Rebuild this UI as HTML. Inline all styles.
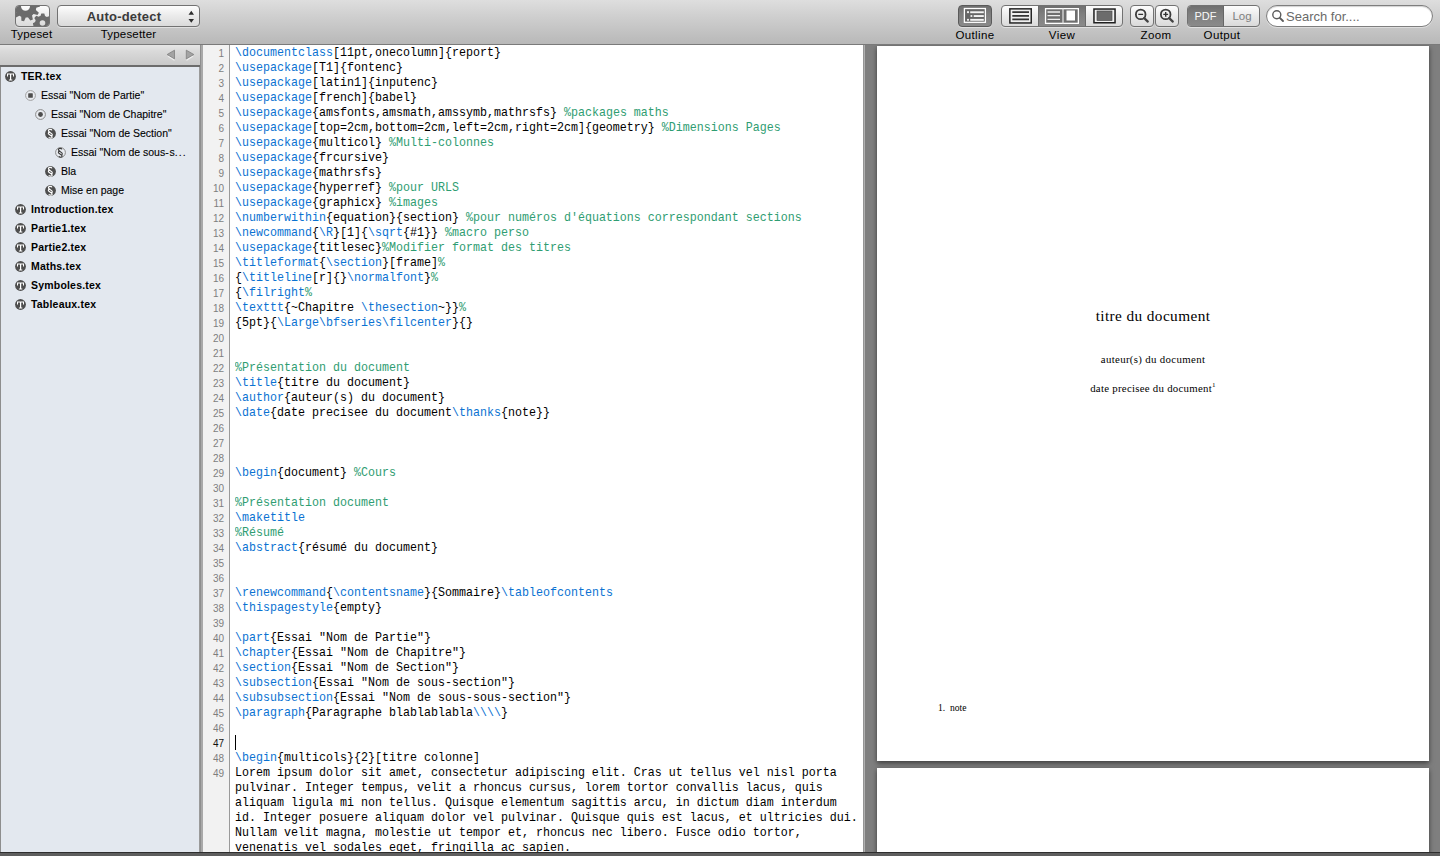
<!DOCTYPE html>
<html><head><meta charset="utf-8">
<style>
*{margin:0;padding:0;box-sizing:border-box}
html,body{width:1440px;height:856px;overflow:hidden;background:#5e5e5e;font-family:"Liberation Sans",sans-serif;position:relative}
#toolbar{position:absolute;left:0;top:0;width:1440px;height:45px;background:linear-gradient(#dedede,#d0d0d0 35%,#b8b8b8);border-bottom:1px solid #7a7a7a}
.lbl{position:absolute;top:28px;font-size:11.5px;letter-spacing:.4px;color:#000;line-height:14px;white-space:nowrap;transform:translateX(-50%)}
.btn{position:absolute;top:5px;height:22px;border:1px solid #727272;border-radius:4px;background:linear-gradient(#fdfdfd,#ececec 45%,#dadada);box-shadow:0 1px 0 rgba(255,255,255,.45);overflow:hidden}
.pressed{background:linear-gradient(#6f6f6f,#7e7e7e 40%,#8a8a8a)}
svg{position:absolute;display:block}
#sidebar{position:absolute;left:0;top:45px;width:200px;height:807px}
#sbhead{position:absolute;left:0;top:0;width:200px;height:22px;background:linear-gradient(#e6e6e6,#dadada 30%,#c9c9c9);border-bottom:2px solid #6c6c6c}
#sblist{position:absolute;left:0;top:22px;width:200px;height:785px;background:#e3e8ef;border-left:1px solid #8e8e8e;border-right:1px solid #9a9a9a}
.it{position:absolute;font-size:10.5px;color:#000;white-space:nowrap;line-height:13px;-webkit-text-stroke:.1px #000}
.it.f{font-weight:bold;font-size:10.5px;-webkit-text-stroke:0;letter-spacing:.2px}
.ic{width:11px;height:11px}
#divider{position:absolute;left:200px;top:45px;width:3px;height:807px;background:#a9a9a9;border-left:1px solid #8f8f8f}
#gutter{position:absolute;left:203px;top:45px;width:27px;height:807px;background:#f2f2f2;border-right:1px solid #9a9a9a}
#nums{position:absolute;right:5px;top:0.5px;font-size:10px;line-height:15px;color:#7e7e7e;text-align:right;white-space:pre}
#editor{position:absolute;left:230px;top:45px;width:633px;height:807px;background:#fff;overflow:hidden}
#code{position:absolute;left:4.5px;top:1px;font-family:"Liberation Mono",monospace;font-size:12.6px;transform:scaleX(.9259);transform-origin:0 0;line-height:15px;color:#000;white-space:pre}
#code b{font-weight:normal;color:#0a72d2}
#code i{font-style:normal;color:#2f9d72}
#cursor{position:absolute;left:5px;top:690px;width:1px;height:15px;background:#000}
#pdfarea{position:absolute;left:863px;top:45px;width:577px;height:807px;background:#7f7f7f;border-left:1px solid #959595;overflow:hidden}
#pdfline{position:absolute;left:864px;top:45px;width:1px;height:807px;background:#b0b0b0}
.page{position:absolute;background:#fff;font-family:"Liberation Serif",serif;color:#000}
.pt{position:absolute;white-space:nowrap;line-height:1}
#bottom{position:absolute;left:0;top:852px;width:1440px;height:4px;background:#5e5e5e;border-top:1px solid #2e2e2e}
</style></head><body>
<div id="toolbar">
  <!-- Typeset -->
  <div class="btn" style="left:15px;width:35px">
    <svg width="33" height="20" viewBox="1 1 33 20" style="left:0;top:0">
      <path fill="#6b6b6b" fill-rule="evenodd" d="M10.73,12.60 L9.08,16.33 L6.38,15.81 L6.24,11.72 L5.75,11.50 L5.26,11.25 L4.80,10.97 L4.34,10.67 L0.81,12.72 L-1.07,10.71 L1.22,7.32 L0.95,6.85 L0.71,6.36 L0.49,5.87 L0.30,5.36 L-3.76,4.94 L-4.09,2.21 L-0.25,0.81 L-0.19,0.27 L-0.10,-0.26 L0.02,-0.79 L0.16,-1.31 L-2.88,-4.05 L-1.55,-6.45 L2.38,-5.32 L2.75,-5.72 L3.13,-6.10 L3.54,-6.46 L3.96,-6.80 L3.11,-10.79 L5.60,-11.95 L8.11,-8.73 L8.65,-8.84 L9.18,-8.92 L9.72,-8.97 L10.27,-9.00 L11.92,-12.73 L14.62,-12.21 L14.76,-8.12 L15.25,-7.90 L15.74,-7.65 L16.20,-7.37 L16.66,-7.07 L20.19,-9.12 L22.07,-7.11 L19.78,-3.72 L20.05,-3.25 L20.29,-2.76 L20.51,-2.27 L20.70,-1.76 L24.76,-1.34 L25.09,1.39 L21.25,2.79 L21.19,3.33 L21.10,3.86 L20.98,4.39 L20.84,4.91 L23.88,7.65 L22.55,10.05 L18.62,8.92 L18.25,9.32 L17.87,9.70 L17.46,10.06 L17.04,10.40 L17.89,14.39 L15.40,15.55 L12.89,12.33 L12.35,12.44 L11.82,12.52 L11.28,12.57Z M6.00,1.20 a4.5,4.5 0 1,0 9.00,0 a4.5,4.5 0 1,0 -9.00,0Z"/>
      <path fill="#6b6b6b" fill-rule="evenodd" d="M25.46,10.89 L26.33,8.47 L29.33,8.58 L30.03,11.05 L30.49,11.23 L30.94,11.45 L31.37,11.70 L31.79,11.97 L34.22,11.14 L36.01,13.56 L34.51,15.64 L34.66,16.12 L34.77,16.61 L34.84,17.10 L34.89,17.59 L37.05,18.98 L36.28,21.88 L33.72,22.01 L33.43,22.42 L33.12,22.81 L32.78,23.18 L32.42,23.52 L32.69,26.08 L29.94,27.29 L28.24,25.36 L27.74,25.40 L27.24,25.40 L26.74,25.36 L26.25,25.29 L24.42,27.09 L21.76,25.70 L22.20,23.17 L21.87,22.80 L21.56,22.41 L21.27,22.00 L21.02,21.57 L18.47,21.26 L17.91,18.31 L20.16,17.08 L20.24,16.59 L20.35,16.10 L20.49,15.63 L20.67,15.16 L19.32,12.97 L21.27,10.69 L23.64,11.69 L24.07,11.44 L24.52,11.22 L24.99,11.04Z M24.70,18.00 a2.8,2.8 0 1,0 5.60,0 a2.8,2.8 0 1,0 -5.60,0Z"/>
    </svg>
  </div>
  <div class="lbl" style="left:31.5px;top:27px;letter-spacing:.2px">Typeset</div>
  <!-- Auto-detect -->
  <div class="btn" style="left:57px;width:143px">
    <svg width="12" height="14" style="left:129px;top:4px" viewBox="0 0 12 14"><path d="M1.5 4.8 L4.3 0.8 L7 4.8Z M1.5 8.9 L7 8.9 L4.3 12.8Z" fill="#2e2e2e"/></svg>
  </div>
  <div style="position:absolute;left:57px;top:8px;width:134px;text-align:center;font-size:13px;font-weight:bold;color:#3a3a3a;line-height:17px;letter-spacing:.2px">Auto-detect</div>
  <div class="lbl" style="left:128.5px;top:27px;letter-spacing:.2px">Typesetter</div>
  <!-- Outline -->
  <div class="btn pressed" style="left:958px;width:34px;border-color:#5a5a5a">
    <svg width="32" height="20" viewBox="0 0 32 20" style="left:0;top:0">
      <rect x="5.4" y="2.5" width="21" height="13.8" fill="#666" stroke="#fff" stroke-width="1.3"/>
      <g fill="#f4f4f4"><circle cx="9" cy="6.2" r="1.1"/><rect x="11.2" y="5.3" width="13.6" height="1.9"/>
      <circle cx="12.4" cy="10" r="1.1"/><rect x="14.7" y="9.1" width="10.1" height="1.9"/>
      <circle cx="9" cy="13.8" r="1.1"/><rect x="11.2" y="12.9" width="13.6" height="1.9"/></g>
    </svg>
  </div>
  <div class="lbl" style="left:975px">Outline</div>
  <!-- View -->
  <div class="btn" style="left:1001px;width:122px">
    <div class="pressed" style="position:absolute;left:36px;top:0;width:48px;height:20px;border-left:1px solid #6a6a6a;border-right:1px solid #6a6a6a"></div>
    <svg width="120" height="20" viewBox="0 0 120 20" style="left:0;top:0">
      <rect x="7.85" y="2.85" width="21.4" height="14.1" fill="#eee" stroke="#262626" stroke-width="1.5"/>
      <g stroke="#333" stroke-width="1.6"><path d="M10.3 6.1H27M10.3 9.9H27M10.3 13.4H27"/></g>
      <rect x="43.55" y="2.65" width="32.8" height="14.7" fill="#6e6e6e" stroke="#fff" stroke-width="1.3"/>
      <path d="M61 2.6V17.4" stroke="#ddd" stroke-width="1.3"/>
      <g stroke="#eee" stroke-width="1.3"><path d="M45.5 6H58M45.5 9.7H58M45.5 13.4H58"/></g>
      <rect x="64.5" y="4.5" width="8.5" height="10" fill="#fff"/>
      <rect x="91.95" y="3.05" width="21.1" height="13.7" fill="#f2f2f2" stroke="#1f1f1f" stroke-width="1.5"/>
      <rect x="95" y="5" width="15" height="9.5" fill="#6c6c6c" stroke="#4a4a4a" stroke-width=".7"/>
    </svg>
  </div>
  <div class="lbl" style="left:1062px">View</div>
  <!-- Zoom -->
  <div class="btn" style="left:1130px;width:24px">
    <svg width="22" height="20" viewBox="0 0 22 20" style="left:0;top:0">
      <circle cx="9.7" cy="8.4" r="4.8" fill="none" stroke="#3c3c3c" stroke-width="1.8"/>
      <path d="M13.2 12.1 L16.8 15.6" stroke="#444" stroke-width="2.2" stroke-linecap="round"/>
      <path d="M7.3 8.4H12.1" stroke="#333" stroke-width="1.4"/>
    </svg>
  </div>
  <div class="btn" style="left:1155px;width:24px">
    <svg width="22" height="20" viewBox="0 0 22 20" style="left:0;top:0">
      <circle cx="9.7" cy="8.4" r="4.8" fill="none" stroke="#3c3c3c" stroke-width="1.8"/>
      <path d="M13.2 12.1 L16.8 15.6" stroke="#444" stroke-width="2.2" stroke-linecap="round"/>
      <path d="M7.3 8.4H12.1M9.7 6V10.8" stroke="#333" stroke-width="1.4"/>
    </svg>
  </div>
  <div class="lbl" style="left:1156px">Zoom</div>
  <!-- Output -->
  <div class="btn" style="left:1187px;width:73px">
    <div class="pressed" style="position:absolute;left:0;top:0;width:36px;height:20px;border-right:1px solid #666"></div>
  </div>
  <div style="position:absolute;left:1188px;top:9px;width:35px;text-align:center;font-size:11px;color:#f8f8f8;line-height:14px">PDF</div>
  <div style="position:absolute;left:1224px;top:9px;width:36px;text-align:center;font-size:11.5px;color:#808080;line-height:14px">Log</div>
  <div class="lbl" style="left:1222px">Output</div>
  <!-- Search -->
  <div style="position:absolute;left:1266px;top:5px;width:167px;height:22px;border:1px solid #7e7e7e;border-radius:11px;background:#fff;box-shadow:inset 0 1px 1px rgba(0,0,0,.18),0 1px 0 rgba(255,255,255,.4)"></div>
  <svg width="20" height="20" viewBox="0 0 20 20" style="left:1268px;top:5px">
    <circle cx="8.8" cy="9.8" r="4" fill="none" stroke="#5c5c5c" stroke-width="1.4"/>
    <path d="M11.8 12.8 L15 16" stroke="#5c5c5c" stroke-width="1.9" stroke-linecap="round"/>
  </svg>
  <div style="position:absolute;left:1286px;top:9px;font-size:13px;color:#6a6a6a;line-height:16px">Search for....</div>
</div>
<div id="sidebar">
  <div id="sbhead">
    <svg width="40" height="20" viewBox="0 0 40 20" style="left:160px;top:0">
      <path d="M7.5 10.5 L14.5 6 L14.5 15Z M26.5 6 L33.5 10.5 L26.5 15Z" fill="#fff" opacity=".6" transform="translate(0,1)"/>
      <path d="M7.2 9.5 L14.5 5.2 L14.5 13.9Z M26.3 5.2 L33.8 9.5 L26.3 13.9Z" fill="#a3a3a3" stroke="#7e7e7e" stroke-width=".8" stroke-linejoin="round"/>
    </svg>
  </div>
  <div id="sblist"></div>
</div>
<svg style="left:5.0px;top:70.5px" width="11" height="11" viewBox="0 0 11 11"><circle cx="5.5" cy="5.5" r="5.4" fill="#4e4e4e"/><path fill="#fff" d="M2,2.4H9V3.6H2Z M2,2.4H3V5.4H2Z M8,2.4H9V5.4H8Z M5,2.4H6.2V9.1H5Z M3.9,8.5H7.3V9.5H3.9Z"/></svg><div class="it f" style="left:21px;top:70px">TER.tex</div>
<svg style="left:25.0px;top:89.5px" width="11" height="11" viewBox="0 0 11 11"><circle cx="5.5" cy="5.5" r="4.9" fill="#e9ecf1" stroke="#a0a0a0" stroke-width="1"/><rect x="3.2" y="3.2" width="4.6" height="4.6" rx=".6" fill="#4e4e4e"/></svg><div class="it" style="left:41px;top:89px">Essai &quot;Nom de Partie&quot;</div>
<svg style="left:35.0px;top:108.5px" width="11" height="11" viewBox="0 0 11 11"><circle cx="5.5" cy="5.5" r="4.9" fill="#e9ecf1" stroke="#8a8a8a" stroke-width="1"/><circle cx="5.5" cy="5.5" r="2.4" fill="#4e4e4e"/></svg><div class="it" style="left:51px;top:108px">Essai &quot;Nom de Chapitre&quot;</div>
<svg style="left:45.0px;top:127.5px" width="11" height="11" viewBox="0 0 11 11"><circle cx="5.5" cy="5.5" r="5.4" fill="#4e4e4e"/><path fill="none" stroke="#fff" stroke-width="1.15" d="M6.9,2.4 C6.5,1.0 3.4,0.9 3.4,2.8 C3.4,4.5 7.3,4.9 7.3,6.7 C7.3,7.7 6.5,8.1 5.9,8.2 M5.1,3.8 C4.3,3.9 3.3,4.4 3.3,5.3 C3.3,7.0 7.2,7.4 7.2,9.0 C7.2,10.6 4.2,10.5 3.9,9.2"/></svg><div class="it" style="left:61px;top:127px">Essai &quot;Nom de Section&quot;</div>
<svg style="left:55.0px;top:146.5px" width="11" height="11" viewBox="0 0 11 11"><circle cx="5.5" cy="5.5" r="4.9" fill="#e9ecf1" stroke="#8a8a8a" stroke-width="1"/><path fill="none" stroke="#3a3a3a" stroke-width="1.1" d="M6.9,2.4 C6.5,1.0 3.4,0.9 3.4,2.8 C3.4,4.5 7.3,4.9 7.3,6.7 C7.3,7.7 6.5,8.1 5.9,8.2 M5.1,3.8 C4.3,3.9 3.3,4.4 3.3,5.3 C3.3,7.0 7.2,7.4 7.2,9.0 C7.2,10.6 4.2,10.5 3.9,9.2"/></svg><div class="it" style="left:71px;top:146px">Essai &quot;Nom de sous<span style="letter-spacing:.8px">-</span>s<span style="letter-spacing:1.1px">...</span></div>
<svg style="left:45.0px;top:165.5px" width="11" height="11" viewBox="0 0 11 11"><circle cx="5.5" cy="5.5" r="5.4" fill="#4e4e4e"/><path fill="none" stroke="#fff" stroke-width="1.15" d="M6.9,2.4 C6.5,1.0 3.4,0.9 3.4,2.8 C3.4,4.5 7.3,4.9 7.3,6.7 C7.3,7.7 6.5,8.1 5.9,8.2 M5.1,3.8 C4.3,3.9 3.3,4.4 3.3,5.3 C3.3,7.0 7.2,7.4 7.2,9.0 C7.2,10.6 4.2,10.5 3.9,9.2"/></svg><div class="it" style="left:61px;top:165px">Bla</div>
<svg style="left:45.0px;top:184.5px" width="11" height="11" viewBox="0 0 11 11"><circle cx="5.5" cy="5.5" r="5.4" fill="#4e4e4e"/><path fill="none" stroke="#fff" stroke-width="1.15" d="M6.9,2.4 C6.5,1.0 3.4,0.9 3.4,2.8 C3.4,4.5 7.3,4.9 7.3,6.7 C7.3,7.7 6.5,8.1 5.9,8.2 M5.1,3.8 C4.3,3.9 3.3,4.4 3.3,5.3 C3.3,7.0 7.2,7.4 7.2,9.0 C7.2,10.6 4.2,10.5 3.9,9.2"/></svg><div class="it" style="left:61px;top:184px">Mise en page</div>
<svg style="left:15.0px;top:203.5px" width="11" height="11" viewBox="0 0 11 11"><circle cx="5.5" cy="5.5" r="5.4" fill="#4e4e4e"/><path fill="#fff" d="M2,2.4H9V3.6H2Z M2,2.4H3V5.4H2Z M8,2.4H9V5.4H8Z M5,2.4H6.2V9.1H5Z M3.9,8.5H7.3V9.5H3.9Z"/></svg><div class="it f" style="left:31px;top:203px">Introduction.tex</div>
<svg style="left:15.0px;top:222.5px" width="11" height="11" viewBox="0 0 11 11"><circle cx="5.5" cy="5.5" r="5.4" fill="#4e4e4e"/><path fill="#fff" d="M2,2.4H9V3.6H2Z M2,2.4H3V5.4H2Z M8,2.4H9V5.4H8Z M5,2.4H6.2V9.1H5Z M3.9,8.5H7.3V9.5H3.9Z"/></svg><div class="it f" style="left:31px;top:222px">Partie1.tex</div>
<svg style="left:15.0px;top:241.5px" width="11" height="11" viewBox="0 0 11 11"><circle cx="5.5" cy="5.5" r="5.4" fill="#4e4e4e"/><path fill="#fff" d="M2,2.4H9V3.6H2Z M2,2.4H3V5.4H2Z M8,2.4H9V5.4H8Z M5,2.4H6.2V9.1H5Z M3.9,8.5H7.3V9.5H3.9Z"/></svg><div class="it f" style="left:31px;top:241px">Partie2.tex</div>
<svg style="left:15.0px;top:260.5px" width="11" height="11" viewBox="0 0 11 11"><circle cx="5.5" cy="5.5" r="5.4" fill="#4e4e4e"/><path fill="#fff" d="M2,2.4H9V3.6H2Z M2,2.4H3V5.4H2Z M8,2.4H9V5.4H8Z M5,2.4H6.2V9.1H5Z M3.9,8.5H7.3V9.5H3.9Z"/></svg><div class="it f" style="left:31px;top:260px">Maths.tex</div>
<svg style="left:15.0px;top:279.5px" width="11" height="11" viewBox="0 0 11 11"><circle cx="5.5" cy="5.5" r="5.4" fill="#4e4e4e"/><path fill="#fff" d="M2,2.4H9V3.6H2Z M2,2.4H3V5.4H2Z M8,2.4H9V5.4H8Z M5,2.4H6.2V9.1H5Z M3.9,8.5H7.3V9.5H3.9Z"/></svg><div class="it f" style="left:31px;top:279px">Symboles.tex</div>
<svg style="left:15.0px;top:298.5px" width="11" height="11" viewBox="0 0 11 11"><circle cx="5.5" cy="5.5" r="5.4" fill="#4e4e4e"/><path fill="#fff" d="M2,2.4H9V3.6H2Z M2,2.4H3V5.4H2Z M8,2.4H9V5.4H8Z M5,2.4H6.2V9.1H5Z M3.9,8.5H7.3V9.5H3.9Z"/></svg><div class="it f" style="left:31px;top:298px">Tableaux.tex</div>
<div id="divider"></div>
<div id="gutter"><div id="nums">1
2
3
4
5
6
7
8
9
10
11
12
13
14
15
16
17
18
19
20
21
22
23
24
25
26
27
28
29
30
31
32
33
34
35
36
37
38
39
40
41
42
43
44
45
46
<span style="color:#111">47</span>
48
49</div></div>
<div id="editor"><div id="code"><b>\documentclass</b>[11pt,onecolumn]{report}
<b>\usepackage</b>[T1]{fontenc}
<b>\usepackage</b>[latin1]{inputenc}
<b>\usepackage</b>[french]{babel}
<b>\usepackage</b>{amsfonts,amsmath,amssymb,mathrsfs} <i>%packages maths</i>
<b>\usepackage</b>[top=2cm,bottom=2cm,left=2cm,right=2cm]{geometry} <i>%Dimensions Pages</i>
<b>\usepackage</b>{multicol} <i>%Multi-colonnes</i>
<b>\usepackage</b>{frcursive}
<b>\usepackage</b>{mathrsfs}
<b>\usepackage</b>{hyperref} <i>%pour URLS</i>
<b>\usepackage</b>{graphicx} <i>%images</i>
<b>\numberwithin</b>{equation}{section} <i>%pour numéros d&#x27;équations correspondant sections</i>
<b>\newcommand</b>{<b>\R</b>}[1]{<b>\sqrt</b>{#1}} <i>%macro perso</i>
<b>\usepackage</b>{titlesec}<i>%Modifier format des titres</i>
<b>\titleformat</b>{<b>\section</b>}[frame]<i>%</i>
{<b>\titleline</b>[r]{}<b>\normalfont</b>}<i>%</i>
{<b>\filright</b><i>%</i>
<b>\texttt</b>{~Chapitre <b>\thesection</b>~}}<i>%</i>
{5pt}{<b>\Large</b><b>\bfseries</b><b>\filcenter</b>}{}


<i>%Présentation du document</i>
<b>\title</b>{titre du document}
<b>\author</b>{auteur(s) du document}
<b>\date</b>{date precisee du document<b>\thanks</b>{note}}



<b>\begin</b>{document} <i>%Cours</i>

<i>%Présentation document</i>
<b>\maketitle</b>
<i>%Résumé</i>
<b>\abstract</b>{résumé du document}


<b>\renewcommand</b>{<b>\contentsname</b>}{Sommaire}<b>\tableofcontents</b>
<b>\thispagestyle</b>{empty}

<b>\part</b>{Essai &quot;Nom de Partie&quot;}
<b>\chapter</b>{Essai &quot;Nom de Chapitre&quot;}
<b>\section</b>{Essai &quot;Nom de Section&quot;}
<b>\subsection</b>{Essai &quot;Nom de sous-section&quot;}
<b>\subsubsection</b>{Essai &quot;Nom de sous-sous-section&quot;}
<b>\paragraph</b>{Paragraphe blablablabla<b>\\\\</b>}


<b>\begin</b>{multicols}{2}[titre colonne]
Lorem ipsum dolor sit amet, consectetur adipiscing elit. Cras ut tellus vel nisl porta
pulvinar. Integer tempus, velit a rhoncus cursus, lorem tortor convallis lacus, quis
aliquam ligula mi non tellus. Quisque elementum sagittis arcu, in dictum diam interdum
id. Integer posuere aliquam dolor vel pulvinar. Quisque quis est lacus, et ultricies dui.
Nullam velit magna, molestie ut tempor et, rhoncus nec libero. Fusce odio tortor,
venenatis vel sodales eget, fringilla ac sapien.</div><div id="cursor"></div></div>
<div id="pdfarea">
  <div class="page" style="left:13px;top:1px;width:552px;height:715px;box-shadow:0 2px 5px rgba(0,0,0,.55)">
    <div class="pt" style="left:0;width:552px;text-align:center;top:262px;font-size:15.3px;letter-spacing:.4px">titre du document</div>
    <div class="pt" style="left:0;width:552px;text-align:center;top:308px;font-size:10.8px;letter-spacing:.35px">auteur(s) du document</div>
    <div class="pt" style="left:0;width:552px;text-align:center;top:335.5px;font-size:10.8px;letter-spacing:.28px">date precisee du document<sup style="font-size:7px;vertical-align:5px">1</sup></div>
    <div class="pt" style="left:61px;top:656.5px;font-size:9.6px">1.&nbsp;&nbsp;note</div>
  </div>
  <div class="page" style="left:13px;top:723px;width:552px;height:200px;box-shadow:0 2px 5px rgba(0,0,0,.55)"></div>
</div>
<div id="pdfline"></div>
<div id="bottom"></div>
</body></html>
